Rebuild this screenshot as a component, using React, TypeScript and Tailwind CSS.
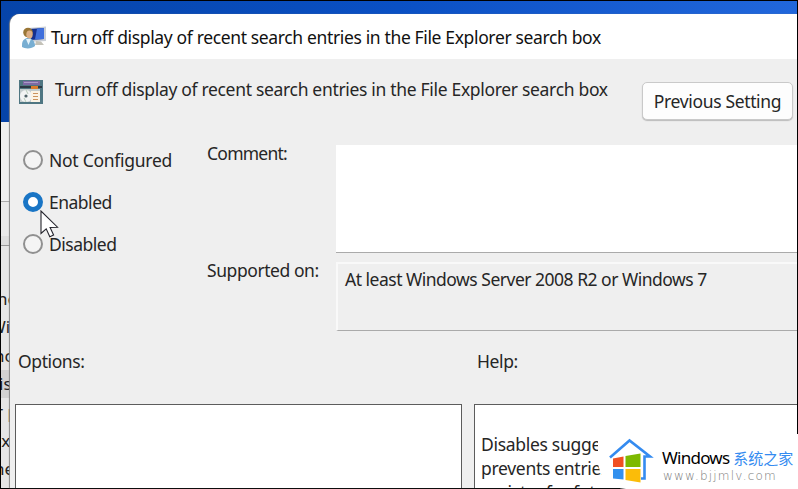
import { useState } from 'react';
import clsx from 'clsx';

const POLICY_NAME = 'Turn off display of recent search entries in the File Explorer search box';

const STATES = [
  { label: 'Not Configured', tracking: 'tracking-[-0.27px]' },
  { label: 'Enabled', tracking: 'tracking-[-0.5px]' },
  { label: 'Disabled', tracking: 'tracking-[-0.5px]' },
];

const BACKGROUND_LINES = [
  { text: 'ne', offset: '-ml-[4px]' },
  { text: 'Wi', offset: '-ml-[11px]' },
  { text: 'nc', offset: '-ml-[7px]' },
  { text: 'is', offset: '-ml-[2px]' },
  { text: 'r p', offset: '-ml-[5px]' },
  { text: 'ex', offset: '-ml-[9px]' },
  { text: 'ne', offset: '-ml-[7px]' },
];

const UserMonitorIcon = () => (
  <svg width="26" height="24" viewBox="0 0 26 24">
    <path d="M7 3 L25 1.5 L25 16 L9 17Z" fill="#c9ced6" />
    <path d="M8 4 L23 3 L23 14 L10 15Z" fill="#14308f" />
    <path d="M16 3.5 L23 3 L23 14 L14 14.5Z" fill="#3f6fdc" />
    <path d="M15 16 L20 16.5 L23 20 L14 20Z" fill="#c4c2b8" />
    <path d="M1 20 C1 15 4 13 7 13 C11 13 14 16 14 21 C11 24 4 24 1 22Z" fill="#78aed2" />
    <path d="M5 14 L7.5 20 L10 14Z" fill="#e3f2fa" />
    <circle cx="7" cy="7.5" r="4.8" fill="#9a7636" />
    <ellipse cx="8.5" cy="9.5" rx="3.2" ry="4" fill="#dcae84" />
  </svg>
);

const PolicyIcon = () => (
  <svg width="24" height="24" viewBox="0 0 24 24">
    <rect width="24" height="24" fill="#4f7682" />
    <rect x="4" y="1" width="17" height="4" fill="#7d69a4" />
    <path d="M5 2.5h14" stroke="#a99bc8" />
    <rect x="1" y="6" width="22" height="2" fill="#2c3944" />
    <rect x="12" y="6" width="7" height="3" fill="#d97c2d" />
    <rect x="1" y="9" width="20" height="13" fill="#c3cccd" />
    <circle cx="7" cy="16" r="6" fill="#f2f4f4" />
    <circle cx="7" cy="16" r="1.6" fill="#4f6268" />
    <path d="M7 10 L9 14 M7 22 L5 18" stroke="#b6cbb9" />
    <rect x="12" y="11" width="9" height="11" fill="#fbf3e5" />
    <path d="M14 13.5h5M14 16.5h5M14 19.5h5" stroke="#cb935e" strokeWidth="1.2" />
  </svg>
);

const Pointer = () => (
  <svg width="20" height="29" viewBox="0 0 20 29">
    <path
      d="M1 1 L1 23.5 L6.2 18.8 L9.8 26.8 L13.6 25.1 L10.1 17.5 L17.5 17.2Z"
      fill="#fff"
      stroke="#25252d"
      strokeWidth="1.1"
    />
  </svg>
);

const HouseLogo = () => (
  <svg width="48" height="48" viewBox="0 0 48 48">
    <path
      d="M3 20.5 L22.5 3.5 L43 19.5 L37.5 19.5 L37.5 41.5 L34 41.5"
      fill="none"
      stroke="#348bf0"
      strokeWidth="2.6"
    />
    <path d="M6 21.5 L16.5 19.5 L16.5 30 L6 30Z" fill="#f05022" />
    <path d="M18.5 19 L33.5 16.5 L33.5 30 L18.5 30Z" fill="#7db900" />
    <path d="M6 32 L16.5 32 L16.5 42.5 L6 41.5Z" fill="#3290ee" />
    <path d="M18.5 32 L33.5 32 L33.5 45.5 L18.5 43Z" fill="#fbbc09" />
  </svg>
);

// Whatever is still visible of the desktop behind the dialog
const Backdrop = () => (
  <div className="flex h-full flex-col overflow-hidden">
    <div className="h-[121px] shrink-0 bg-linear-to-r from-[#0644a9] via-[#0a50c4] to-[#2167dc]" />
    <div className="h-20 shrink-0 border-b border-[#aaaaaa] bg-[#efefef]" />
    <div className="h-[34px] shrink-0 bg-[#e9e9e9]" />
    <div className="h-[10px] shrink-0 border-b border-[#999999] bg-[#dedede]" />
    <div className="flex w-[9px] flex-1 flex-col overflow-hidden bg-[#e6e6e6] pt-[39px] text-[17px] text-[#222222]">
      {BACKGROUND_LINES.map(({ text, offset }, index) => (
        <div
          key={index}
          className={clsx('flex h-[28.3px] shrink-0 items-center whitespace-pre', text === 'is' && 'bg-[#d2d2d2]')}
        >
          <span className={offset}>{text}</span>
        </div>
      ))}
    </div>
  </div>
);

interface RadioProps {
  label: string;
  tracking: string;
  checked: boolean;
  onSelect: () => void;
}

const Radio = ({ label, tracking, checked, onSelect }: RadioProps) => (
  <button type="button" role="radio" aria-checked={checked} onClick={onSelect} className="flex h-[42px] items-center gap-[6px]">
    <span
      className={clsx(
        'size-5 rounded-full',
        checked ? 'border-[5px] border-[#1975c5] bg-white' : 'border-2 border-[#909090] bg-[#f4f4f4]'
      )}
    />
    <span className={tracking}>{label}</span>
  </button>
);

const Watermark = () => (
  <div className="flex h-[55px] w-[200px] rounded-bl-[28px] bg-white pl-[9px]">
    <div className="pt-[3px]">
      <HouseLogo />
    </div>
    <div className="flex flex-col pt-[14px] pl-[7px] whitespace-nowrap">
      <div className="flex h-5 items-center gap-1 text-[17px] leading-5">
        <span className="tracking-[-0.75px] text-black">Windows</span>
        <span className="font-['Noto_Sans_CJK_SC',sans-serif] text-[15px] text-[#348bf0]">系统之家</span>
      </div>
      <div className="pl-px font-['DejaVu_Sans',sans-serif] text-[12px] leading-[16px] font-extralight tracking-[1.2px] text-[#777777]">
        www.bjjmlv.com
      </div>
    </div>
  </div>
);

const App = () => {
  const [selected, setSelected] = useState('Enabled');

  return (
    <div className="relative h-[489px] w-[798px] overflow-hidden bg-black p-px font-['Noto_Sans','Open_Sans',sans-serif] text-[17.5px] leading-6 text-[#262626]">
      <Backdrop />

      {/* Dialog window */}
      <div className="absolute top-[14px] left-[10px] flex h-[474px] w-[787px] flex-col overflow-hidden rounded-tl-[10px] bg-[#efefef] shadow-[-1px_0_1px_#888888]">
        <div className="flex h-[45px] shrink-0 items-center gap-1 bg-white pl-[11px] whitespace-nowrap text-[#111111]">
          <UserMonitorIcon />
          <span className="tracking-[-0.36px]">{POLICY_NAME}</span>
        </div>

        <div className="flex h-[86px] shrink-0 pl-[9px] whitespace-nowrap">
          <div className="pt-[21px]">
            <PolicyIcon />
          </div>
          <span className="w-[599px] shrink-0 pt-[18px] pl-3 tracking-[-0.32px]">{POLICY_NAME}</span>
          <button className="mt-[23px] h-[38px] w-[151px] shrink-0 rounded-[5px] border border-[#c9c9c9] bg-[#fdfdfd] tracking-[-0.35px] shadow-[0_1px_1px_#bbbbbb]">
            Previous Setting
          </button>
        </div>

        <div className="flex h-[186px] shrink-0 whitespace-nowrap">
          <div role="radiogroup" className="-mt-[6px] flex w-[197px] flex-col items-start pl-[13px]">
            {STATES.map(({ label, tracking }) => (
              <Radio
                key={label}
                label={label}
                tracking={tracking}
                checked={selected === label}
                onSelect={() => setSelected(label)}
              />
            ))}
          </div>
          <div className="-mt-[4px] flex w-[129px] flex-col">
            <span className="h-[117px] tracking-[-0.75px]">Comment:</span>
            <span className="tracking-[-0.43px]">Supported on:</span>
          </div>
          <div className="flex flex-1 flex-col">
            <textarea className="h-[108px] resize-none border-b border-[#aaaaaa] bg-white outline-none" />
            <div className="mt-[9px] h-[69px] border-t-2 border-b border-l-2 border-t-[#f9f9f9] border-b-[#aaaaaa] border-l-[#f9f9f9] pt-[3px] pl-[7px] tracking-[-0.5px]">
              At least Windows Server 2008 R2 or Windows 7
            </div>
          </div>
        </div>

        <div className="flex h-[73px] shrink-0 pt-[18px] pl-2 tracking-[-0.4px]">
          <span className="w-[459px]">Options:</span>
          <span>Help:</span>
        </div>

        <div className="flex flex-1 gap-3 pl-[5px]">
          <div className="w-[447px] shrink-0 border border-b-0 border-[#5c5c5c] bg-white" />
          <div className="flex-1 overflow-hidden border border-r-0 border-b-0 border-[#5c5c5c] bg-white pt-[27px] pl-[6px] leading-6 tracking-[-0.3px] whitespace-nowrap">
            <div>Disables suggestions</div>
            <div>prevents entries</div>
            <div>registry for future</div>
          </div>
        </div>
      </div>

      <div className="absolute top-[210px] left-[40px]">
        <Pointer />
      </div>
      <div className="absolute right-0 bottom-0">
        <Watermark />
      </div>
    </div>
  );
};

export default App;
